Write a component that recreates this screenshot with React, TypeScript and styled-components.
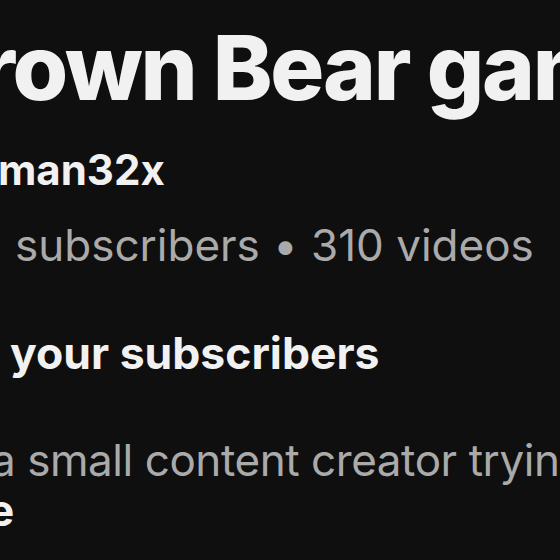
import React from "react";
import styled, { createGlobalStyle } from "styled-components";

const Global = createGlobalStyle`
  html, body {
    margin: 0;
    padding: 0;
    background: #0f0f0f;
  }
  body {
    width: 560px;
    height: 560px;
    overflow: hidden;
    font-family: Inter, "Noto Sans", "Liberation Sans", sans-serif;
    -webkit-font-smoothing: antialiased;
  }
`;

const Page = styled.main`
  width: 560px;
  height: 560px;
  overflow: hidden;
  background: #0f0f0f;
  display: flex;
  flex-direction: column;
`;

const Header = styled.section`
  display: flex;
  flex-direction: column;
  padding-top: 14px;
`;

const Line = styled.div<{
  $size: number;
  $lh: number;
  $weight: number;
  $color: string;
  $shift: number;
  $gap: number;
  $track?: number;
}>`
  font-size: ${(p) => p.$size}px;
  line-height: ${(p) => p.$lh}px;
  font-weight: ${(p) => p.$weight};
  color: ${(p) => p.$color};
  margin-left: ${(p) => p.$shift}px;
  margin-top: ${(p) => p.$gap}px;
  white-space: nowrap;
  letter-spacing: ${(p) => p.$track ?? 0}em;
`;

const Dot = styled.span`
  margin: 0 0.3em;
`;

const Description = styled.section`
  display: flex;
  flex-direction: column;
`;

export default function App() {
  return (
    <>
      <Global />
      <Page>
        <Header>
          <Line $size={90} $lh={108} $weight={800} $color="#f1f1f1" $shift={-78} $gap={0} $track={-0.025}>
            Brown Bear gaming
          </Line>
          <Line $size={42} $lh={50} $weight={700} $color="#f1f1f1" $shift={-2} $gap={23}>
            man32x
          </Line>
          <Line $size={44} $lh={52} $weight={400} $color="#aaaaaa" $shift={15} $gap={24}>
            subscribers<Dot>•</Dot>310 videos
          </Line>
        </Header>
        <Description>
          <Line $size={44.5} $lh={56} $weight={700} $color="#f1f1f1" $shift={10} $gap={54}>
            your subscribers
          </Line>
          <Line $size={44} $lh={50} $weight={400} $color="#aaaaaa" $shift={-9} $gap={54} $track={-0.01}>
            a small content creator trying to grow
          </Line>
          <Line $size={44} $lh={50} $weight={700} $color="#f1f1f1" $shift={-12} $gap={0}>
            e
          </Line>
        </Description>
      </Page>
    </>
  );
}
